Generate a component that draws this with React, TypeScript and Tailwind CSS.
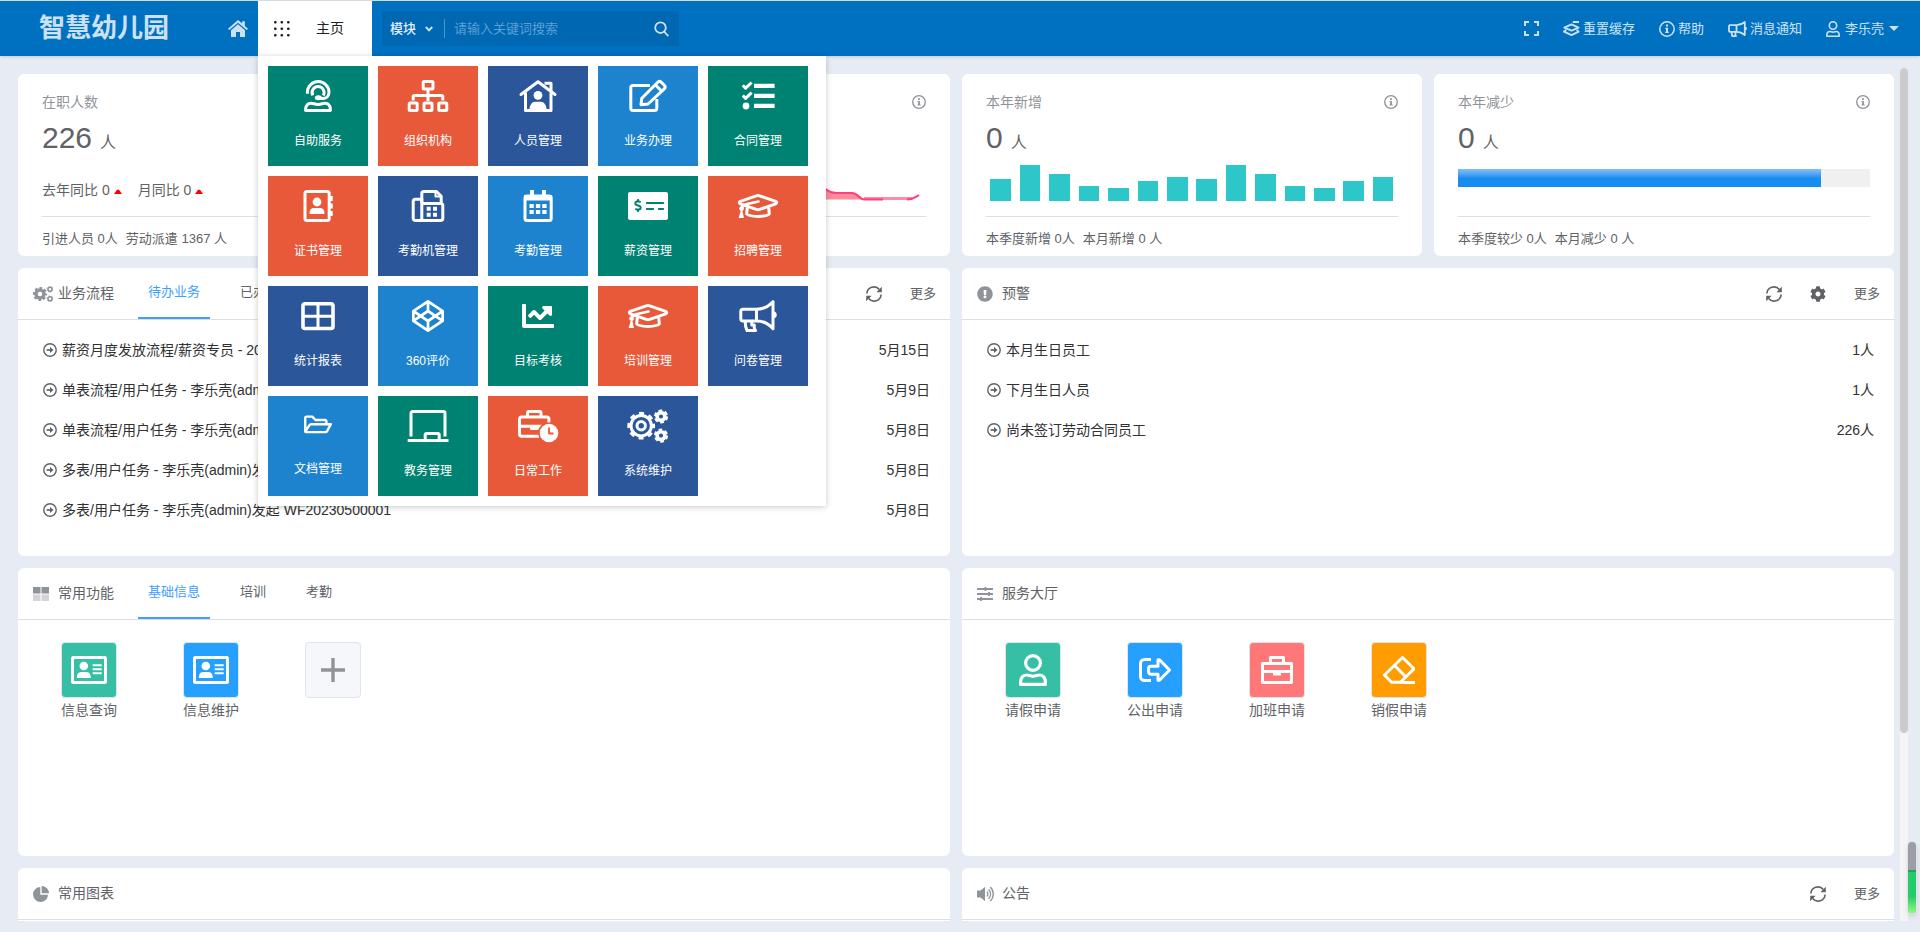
import type { ReactNode } from 'react'
import { FaChartLine, FaCodepen, FaCog, FaExclamationCircle, FaMoneyCheckAlt } from 'react-icons/fa'

type IconProps = { className?: string }

const tileColors = {
  green: 'bg-[#008272]',
  orange: 'bg-[#e8593a]',
  navy: 'bg-[#2b579a]',
  blue: 'bg-[#1d83cf]',
}

function TileIcon({ children }: { children: ReactNode }) {
  return (
    <svg viewBox="0 0 40 32" className="h-8 w-10 overflow-visible" fill="none" stroke="currentColor" strokeWidth="3" strokeLinejoin="round">
      {children}
    </svg>
  )
}

const gradCap = (
  <TileIcon>
    <path d="M18.3 5.8a5 5 0 0 1 3.4 0l16 5.6c1.4.6 1.4 1.8 0 2.4l-16 5.6a5 5 0 0 1-3.4 0l-16-5.6c-1.4-.6-1.4-1.8 0-2.4z" />
    <path d="M20.5 11.6 8 14.2c-3 .8-4.3 2-4.3 5.3" strokeWidth="2.6" strokeLinecap="round" />
    <path d="M9.3 17.5 8.7 24c3.6 3.2 19 3.2 22.6 0l-.6-6.5" />
    <path d="M3.7 17.5 6 28H.6z" fill="currentColor" stroke="none" />
    <circle cx="3.6" cy="18.6" r="2.4" fill="currentColor" stroke="none" />
  </TileIcon>
)

const modules = [
  {
    name: '自助服务', color: tileColors.green, icon: (
      <TileIcon>
        <path d="M9.4 13.8v-1.6a10.8 10.6 0 0 1 21.6 0c0 4-2.8 6.4-6.2 6.4h-4" />
        <path d="M14.8 15.4a6 6 0 1 1 10.4.2" />
        <ellipse cx="20.4" cy="17.8" rx="3.6" ry="2.5" fill="currentColor" stroke="none" />
        <path d="M7.6 30.5c-.4-5 2.400-7.300 5.400-7.300 2.400 0 3.800 1.200 7 1.200s4.600-1.200 7-1.200c3 0 5.800 2.300 5.400 7.300z" />
      </TileIcon>
    ),
  },
  {
    name: '组织机构', color: tileColors.orange, icon: (
      <TileIcon>
        <rect x="15.2" y="1.5" width="9.8" height="7.5" rx="1" />
        <path d="M20 10v11M5.2 20.5v-3.700a1.3 1.3 0 0 1 1.3-1.300h27a1.3 1.3 0 0 1 1.3 1.300v3.700" />
        <rect x="1.2" y="23" width="8" height="7.5" rx="1" />
        <rect x="16" y="23" width="8" height="7.5" rx="1" />
        <rect x="30.8" y="23" width="8" height="7.5" rx="1" />
      </TileIcon>
    ),
  },
  {
    name: '人员管理', color: tileColors.navy, icon: (
      <TileIcon>
        <path d="M3 14.5 20 1.800l17 12.700" strokeLinecap="round" />
        <path d="M7.5 12.5v18H33v-18M26.5 3.200H33v8" />
        <circle cx="20" cy="15.300" r="4.400" fill="currentColor" stroke="none" />
        <path d="M11.3 31c0-6 2.700-9.300 6-9.300h5.400c3.300 0 6 3.300 6 9.300z" fill="currentColor" stroke="none" />
      </TileIcon>
    ),
  },
  {
    name: '业务办理', color: tileColors.blue, icon: (
      <TileIcon>
        <path d="M22 5.500H5a2.200 2.200 0 0 0-2.200 2.200v20.600A2.200 2.200 0 0 0 5 30.500h21.600a2.200 2.200 0 0 0 2.200-2.200V19" />
        <path d="m13 24.700.8-6.500L29.800 2.300a2.500 2.500 0 0 1 3.500 0l3 3a2.500 2.500 0 0 1 0 3.500L20 24z" />
        <path d="m27.500 5 6 6" />
      </TileIcon>
    ),
  },
  {
    name: '合同管理', color: tileColors.green, icon: (
      <TileIcon>
        <path d="m4.800 5.300 2.800 2.900 6-5.700M4.800 15.500l2.800 2.900 6-5.700" />
        <path d="M16 5.900h20.600M16 15.900h20.600M16 25.900h20.600" strokeWidth="4.200" />
        <circle cx="8" cy="26" r="3.400" fill="currentColor" stroke="none" />
      </TileIcon>
    ),
  },
  {
    name: '证书管理', color: tileColors.orange, icon: (
      <TileIcon>
        <rect x="7" y="1.500" width="24.200" height="29" rx="2" />
        <path d="M33 6v5M33 13.500v5M33 21v5" strokeWidth="3.500" />
        <circle cx="19" cy="12" r="4.400" fill="currentColor" stroke="none" />
        <path d="M11.600 24v-1.500c0-3 2-4.500 4-4.500h6.800c2 0 4 1.500 4 4.500V24z" fill="currentColor" stroke="none" />
      </TileIcon>
    ),
  },
  {
    name: '考勤机管理', color: tileColors.navy, icon: (
      <TileIcon>
        <path d="M13.800 9.300H7.500a2.300 2.300 0 0 0-2.300 2.300v16.600a2.300 2.300 0 0 0 2.300 2.300h25a2.300 2.300 0 0 0 2.300-2.300V15.500a2 2 0 0 0-2-2h-19zM13.800 13.500V30" />
        <path d="M13.800 13V3.500a2 2 0 0 1 2-2h12.700l4.700 4.700V13" />
        <path d="M27.500 1.500v5h5" strokeWidth="2" />
        <path d="M18.700 16.700h4v4h-4zM25 16.700h4v4h-4zM18.700 22.700h4v4h-4zM25 22.700h4v4h-4z" fill="currentColor" stroke="none" />
      </TileIcon>
    ),
  },
  {
    name: '考勤管理', color: tileColors.blue, icon: (
      <TileIcon>
        <rect x="7" y="6" width="26.200" height="24.500" rx="2" />
        <path d="M6 5h28v5.500H6zM12 0h4v6h-4zM24 0h4v6h-4z" fill="currentColor" stroke="none" />
        <path d="M11.500 14h4.300v4h-4.300zM17.900 14h4.300v4h-4.300zM24.300 14h4.300v4h-4.300zM11.500 20h4.300v4h-4.300zM17.900 20h4.300v4h-4.300zM24.300 20h4.300v4h-4.300z" fill="currentColor" stroke="none" />
      </TileIcon>
    ),
  },
  { name: '薪资管理', color: tileColors.green, icon: <FaMoneyCheckAlt className="h-8 w-10" /> },
  { name: '招聘管理', color: tileColors.orange, icon: gradCap },
  {
    name: '统计报表', color: tileColors.navy, icon: (
      <TileIcon>
        <rect x="5" y="3.700" width="30" height="24.800" rx="2" strokeWidth="3.600" />
        <path d="M20 4v24M5 16.200h30" />
      </TileIcon>
    ),
  },
  { name: '360评价', color: tileColors.blue, icon: <FaCodepen className="h-8 w-8" /> },
  { name: '目标考核', color: tileColors.green, icon: <FaChartLine className="h-8 w-8" /> },
  { name: '培训管理', color: tileColors.orange, icon: gradCap },
  {
    name: '问卷管理', color: tileColors.navy, icon: (
      <TileIcon>
        <path d="M18.500 9.300H5a2.200 2.200 0 0 0-2.200 2.200v7.300A2.200 2.200 0 0 0 5 21h13.500zM18.500 9.300C25 9.300 31 6 35 1.700v27C31 24 25 21 18.500 21" />
        <path d="M36 11.500c2.200.6 2.700 1.700 2.700 3.400s-.5 2.800-2.700 3.400z" fill="currentColor" stroke="none" />
        <path d="M7.200 21.500c0 3.500.4 6 1.800 9h8.500c-1.500-2-1.600-3.500-1.200-5.500h-2.500v-3.500" />
      </TileIcon>
    ),
  },
  {
    name: '文档管理', color: tileColors.blue, icon: (
      <svg viewBox="0 0 40 30" className="h-[30px] w-10" fill="none" stroke="currentColor" strokeWidth="2.400" strokeLinejoin="round">
        <path d="M7.200 21V8a1.400 1.400 0 0 1 1.400-1.400h5.700L17.500 10H27a1.400 1.400 0 0 1 1.400 1.400V14M7.200 21.500l4.300-6.400a2 2 0 0 1 1.600-.9h19.800l-3.800 6.900a2 2 0 0 1-1.700 1H8.200a1 1 0 0 1-1-.6z" />
      </svg>
    ),
  },
  {
    name: '教务管理', color: tileColors.green, icon: (
      <TileIcon>
        <path d="M3 26.500V3.200a1.700 1.700 0 0 1 1.700-1.700h30.600A1.700 1.700 0 0 1 37 3.200v23.300" />
        <path d="M17.200 30v-5.300a1.200 1.200 0 0 1 1.200-1.200H30a1.200 1.200 0 0 1 1.200 1.200V30M-.3 30.500h40.800" />
      </TileIcon>
    ),
  },
  {
    name: '日常工作', color: tileColors.orange, icon: (
      <TileIcon>
        <path d="M22 26.200H3.700A2.200 2.200 0 0 1 1.500 24V9.200A2.200 2.200 0 0 1 3.700 7h25a2.200 2.200 0 0 1 2.200 2.200V13M9.500 7V3A1.500 1.500 0 0 1 11 1.500h10.500A1.500 1.500 0 0 1 23 3v4M1.500 16.200h22" />
        <path d="M12 16h9v2.500a1.500 1.500 0 0 1-1.500 1.500h-6a1.500 1.500 0 0 1-1.500-1.500z" fill="currentColor" stroke="none" />
        <circle cx="31" cy="23" r="10.800" fill="#e8593a" stroke="none" />
        <circle cx="31" cy="23" r="9.300" fill="currentColor" stroke="none" />
        <path d="M31 17.500v6h4.500" stroke="#e8593a" strokeWidth="1.800" />
      </TileIcon>
    ),
  },
  {
    name: '系统维护', color: tileColors.navy, icon: (
      <TileIcon>
        <circle cx="13.200" cy="15.700" r="10.200" />
        <circle cx="13.200" cy="15.700" r="12.400" strokeDasharray="5 4.740" strokeDashoffset="2.500" />
        <circle cx="13.200" cy="15.700" r="4.200" />
        <circle cx="33" cy="6.500" r="3.900" strokeWidth="3.600" />
        <circle cx="33" cy="6.500" r="5.900" strokeWidth="2.400" strokeDasharray="3.600 2.580" />
        <circle cx="33" cy="25.600" r="3.900" strokeWidth="3.600" />
        <circle cx="33" cy="25.600" r="5.900" strokeWidth="2.400" strokeDasharray="3.600 2.580" />
      </TileIcon>
    ),
  },
]

const todos = [
  { text: '薪资月度发放流程/薪资专员 - 20230500001', date: '5月15日' },
  { text: '单表流程/用户任务 - 李乐壳(admin)发起 WF20230500004', date: '5月9日' },
  { text: '单表流程/用户任务 - 李乐壳(admin)发起 WF20230500003', date: '5月8日' },
  { text: '多表/用户任务 - 李乐壳(admin)发起 WF20230500002', date: '5月8日' },
  { text: '多表/用户任务 - 李乐壳(admin)发起 WF20230500001', date: '5月8日' },
]

const warnings = [
  { text: '本月生日员工', date: '1人' },
  { text: '下月生日人员', date: '1人' },
  { text: '尚未签订劳动合同员工', date: '226人' },
]

const bars = [22, 36, 27, 15, 13, 20, 24, 22, 36, 27, 15, 13, 20, 24]

function InfoIcon({ className }: IconProps) {
  return (
    <svg viewBox="0 0 16 16" className={className} fill="none" stroke="currentColor">
      <circle cx="8" cy="8" r="7.200" strokeWidth="1.500" />
      <path d="M7 3.600h2v2H7zM6.300 6.800H9v4h.8v1.300H6.200v-1.300H7V8h-.7z" fill="currentColor" stroke="none" />
    </svg>
  )
}

function ArrowCircle() {
  return (
    <svg viewBox="0 0 14 14" className="h-3.5 w-3.5 shrink-0 text-[#606266]" fill="none" stroke="currentColor">
      <circle cx="7" cy="7" r="6.200" strokeWidth="1.400" />
      <path d="M3.600 7h4.500" strokeWidth="1.700" />
      <path d="M7 3.900 10.500 7 7 10.100z" fill="currentColor" stroke="none" />
    </svg>
  )
}

function RefreshIcon() {
  return (
    <svg viewBox="0 0 16 16" className="h-4 w-4" fill="none" stroke="currentColor" strokeWidth="1.600">
      <path d="M.9 7.500A7 7 0 0 1 13.300 3.500M15.100 8.500A7 7 0 0 1 2.700 12.500" />
      <path d="M15.800.8v5.400h-5.400zM.2 15.200V9.800h5.400z" fill="currentColor" stroke="none" />
    </svg>
  )
}

function BullhornIcon() {
  return (
    <svg viewBox="0 0 19 16" className="h-4 w-[19px]" fill="none" stroke="currentColor" strokeWidth="1.800" strokeLinejoin="round">
      <path d="M8.500 4.200H2a1 1 0 0 0-1 1v4.600a1 1 0 0 0 1 1h6.500zM8.500 4.200c3.300 0 6-1.300 8.300-3.200v13c-2.300-2-5-3.200-8.300-3.200M3.600 11c0 1.700.2 2.900.9 4.200h3.400c-.6-1-.7-2-.4-4M17.800 6v3" />
    </svg>
  )
}

function UserIcon({ className }: IconProps) {
  return (
    <svg viewBox="0 0 28 32" className={className} fill="none" stroke="currentColor" strokeWidth="3.200" strokeLinejoin="round">
      <circle cx="14" cy="9" r="7.400" />
      <path d="M1.600 30.400c-.4-7 2.600-9.400 6-9.400 2 0 3.500 1.300 6.400 1.300s4.400-1.300 6.400-1.300c3.400 0 6.400 2.400 6 9.400z" />
    </svg>
  )
}

function IdCardIcon() {
  return (
    <svg viewBox="0 0 36 28" className="h-7 w-9" fill="none" stroke="currentColor" strokeWidth="3">
      <rect x="1.500" y="1.500" width="33" height="25" rx="1" />
      <circle cx="12.800" cy="10" r="4.300" fill="currentColor" stroke="none" />
      <path d="M5.800 22c0-4 1.600-6 4-6h6c2.400 0 4 2 4 6z" fill="currentColor" stroke="none" />
      <path d="M21.700 9.200h9M21.700 13.200h9M21.700 17.200h9" strokeWidth="1.900" />
    </svg>
  )
}

function MoreActions({ settings }: { settings?: boolean }) {
  return (
    <div className="ml-auto flex items-center gap-7 text-[#606266]">
      <button type="button" aria-label="刷新"><RefreshIcon /></button>
      {settings && <button type="button" aria-label="设置"><FaCog className="h-4 w-4" /></button>}
      <a href="#more" className="text-[13px]">更多</a>
    </div>
  )
}

function PanelHeader({ icon, title, tabs, children }: { icon: ReactNode; title: string; tabs?: string[]; children?: ReactNode }) {
  return (
    <div className="flex h-[52px] items-center border-b border-[#dcdfe6] pr-3.5 pl-[15px]">
      <span className="flex w-[25px] shrink-0 items-center text-[#909399]">{icon}</span>
      <h2 className="pb-0.5 text-sm text-[#606266]">{title}</h2>
      {tabs && (
        <div className="ml-6 flex gap-5 self-stretch text-[13px] text-[#606266]">
          {tabs.map((tab, index) => (
            <button
              key={tab}
              type="button"
              className={index === 0 ? 'border-b-2 border-[#409eff] px-2.5 pb-0.5 text-[#409eff]' : 'border-b-2 border-transparent px-2.5 pb-0.5'}
            >
              {tab}
            </button>
          ))}
        </div>
      )}
      {children}
    </div>
  )
}

function StatCard({ label, value, footer, children }: { label?: string; value?: string; footer?: ReactNode; children: ReactNode }) {
  return (
    <section className="rounded-md bg-white px-6 pt-[18px] text-[#606266]">
      <div className="flex h-5 items-center justify-between text-sm text-[#909399]">
        <span>{label}</span>
        <InfoIcon className="h-3.5 w-3.5" />
      </div>
      <div className="mt-1.5 h-10 leading-10">
        {value && <><span className="text-[30px]">{value}</span><span className="ml-2 text-base leading-10">人</span></>}
      </div>
      <div className="mt-[7px] h-9">{children}</div>
      <div className="mt-[15px] flex h-10 items-center gap-2 border-t border-[#dcdfe6] pt-1 text-[13px]">{footer}</div>
    </section>
  )
}

function ItemList({ items }: { items: { text: string; date: string }[] }) {
  return (
    <ul className="pt-2.5 pr-5 pl-[25px] text-sm text-[#303133]">
      {items.map((item) => (
        <li key={item.text} className="flex h-10 items-center">
          <ArrowCircle />
          <span className="ml-[5px]">{item.text}</span>
          <span className="ml-auto">{item.date}</span>
        </li>
      ))}
    </ul>
  )
}

function Shortcut({ label, color, children }: { label?: string; color: string; children: ReactNode }) {
  return (
    <button type="button" className="flex w-14 flex-col items-center whitespace-nowrap text-[#606266]">
      <span className={`flex h-14 w-14 items-center justify-center rounded-[4px] border border-[#e0e3eb] ${color}`}>{children}</span>
      <span className="mt-0.5 text-sm">{label}</span>
    </button>
  )
}

function UpMark() {
  return (
    <svg viewBox="0 0 8 5" className="ml-1 inline-block h-[5px] w-2 align-middle"><path d="M0 5 3 .8h2L8 5z" fill="#f00" /></svg>
  )
}

function ModuleMenu() {
  return (
    <div className="absolute top-full left-0 z-10 grid w-[568px] grid-cols-[repeat(5,100px)] gap-2.5 bg-white p-2.5 shadow-[0_1px_6px_rgba(0,0,0,0.22)]">
      {modules.map((item) => (
        <a key={item.name} href="#module" className={`flex h-[100px] flex-col items-center pt-3.5 text-white ${item.color}`}>
          {item.icon}
          <span className="mt-5 text-xs leading-[18px]">{item.name}</span>
        </a>
      ))}
    </div>
  )
}

function Header() {
  return (
    <header className="relative z-10 flex h-14 shrink-0 items-center border-t border-[#d5dbe0] bg-[#0070c1] pr-[21px] pl-[39px] text-[13px] text-white/80 shadow-sm">
      <h1 className="w-[189px] text-[26px] font-bold">智慧幼儿园</h1>
      <a href="#home" aria-label="首页" className="w-[30px]">
        <svg viewBox="0 0 20 17" className="h-[17px] w-5" fill="currentColor">
          <path d="M10 0 0 8.800l1.300 1.300L10 2.700l8.700 7.400L20 8.800l-3.200-2.900V1.300h-2.600v2.300z" />
          <path d="m10 4.300-7 6V17h5v-5h4v5h5v-6.700z" />
        </svg>
      </a>
      <div className="relative flex h-[55px] w-[114px] items-center gap-[26px] bg-white pl-4 text-sm text-[#222]">
        <button type="button" aria-label="全部模块">
          <svg viewBox="0 0 16 16" className="h-4 w-4" fill="currentColor">
            {[0, 6.5, 13].map((y) => [0, 6.5, 13].map((x) => <rect key={`${x}-${y}`} x={x} y={y} width="2.600" height="2.600" rx="1" />))}
          </svg>
        </button>
        <a href="#main" className="pb-0.5">主页</a>
        <ModuleMenu />
      </div>
      <form className="ml-2.5 flex h-[35px] w-[297px] items-center bg-[#0067b3] pr-2.5 pl-2">
        <div className="relative flex items-center">
          <select aria-label="搜索范围" className="w-[55px] appearance-none border-r border-white/30 text-[13px] font-medium text-white/90 outline-none">
            <option>模块</option>
          </select>
          <svg viewBox="0 0 8 6" className="pointer-events-none absolute right-3 h-1.5 w-2" fill="none" stroke="currentColor" strokeWidth="2"><path d="m.8 1 3.200 3.400L7.200 1" /></svg>
        </div>
        <input aria-label="关键词" placeholder="请输入关键词搜索" className="ml-[9px] min-w-0 flex-1 outline-none placeholder:text-[#5b9fd3]" />
        <button type="button" aria-label="搜索">
          <svg viewBox="0 0 16 16" className="h-4 w-4" fill="none" stroke="currentColor" strokeWidth="1.800"><circle cx="7.500" cy="6.700" r="5.300" /><path d="m11 10.500 4.300 4.700" /></svg>
        </button>
      </form>
      <nav className="ml-auto flex items-center gap-6">
        <button type="button" aria-label="全屏">
          <svg viewBox="0 0 15 15" className="h-[15px] w-[15px]" fill="none" stroke="currentColor" strokeWidth="2"><path d="M1 5V1h4M10 1h4v4M14 10v4h-4M5 14H1v-4" /></svg>
        </button>
        <button type="button" className="flex items-center gap-[3px]">
          <svg viewBox="0 0 17 15" className="h-[15px] w-[17px]" fill="none" stroke="currentColor" strokeWidth="1.800" strokeLinejoin="round">
            <path d="M9.800 1H16M8.500 3.400 15.500 6.600 8.500 9.700 1.300 6.600zM3.200 9 1 10.600l7.500 3.500 7.200-3.500L13.600 9" />
          </svg>
          重置缓存
        </button>
        <button type="button" className="flex items-center gap-[3px]"><InfoIcon className="h-4 w-4" />帮助</button>
        <button type="button" className="flex items-center gap-[3px]"><BullhornIcon />消息通知</button>
        <button type="button" className="flex items-center gap-[5px]">
          <UserIcon className="h-4 w-3.5" />
          李乐壳
          <svg viewBox="0 0 10 5" className="h-[5px] w-2.5" fill="currentColor"><path d="M0 0h10L5 5z" /></svg>
        </button>
      </nav>
    </header>
  )
}

export default function App() {
  return (
    <div className="flex h-screen flex-col overflow-hidden bg-[#e7ecf4] font-['Liberation_Sans','Noto_Sans_CJK_SC',sans-serif]">
      <Header />
      <div className="mt-3 mb-[11px] flex min-h-0 flex-1 pr-3 pl-[18px]">
        <main className="h-full flex-1 overflow-hidden pt-1.5 pr-1.5">
          <div className="grid grid-cols-4 gap-3">
            <StatCard label="在职人数" value="226" footer={<><span>引进人员 0人</span><span>劳动派遣 1367 人</span></>}>
              <div className="flex h-full items-end gap-4 text-sm leading-[22px]">
                <span>去年同比 0<UpMark /></span>
                <span>月同比 0<UpMark /></span>
              </div>
            </StatCard>
            <StatCard>
              <svg viewBox="0 0 412 36" preserveAspectRatio="none" className="h-9 w-full">
                <path d="M8 20C60 20 60 6 110 6s60 20 110 18 60-18 80-12c6 3 10 16 22 16h16c7 0 6 6.500 13 6.500H8z" fill="#ff8b9b" />
                <path d="M350 33.500h48" stroke="#ff8ba5" strokeWidth="3" />
                <path d="M8 20C60 20 60 6 110 6s60 20 110 18 60-18 80-12c6 3 10 16 22 16h16c7 0 6 6.500 13 6.500h18M393 34.500c6 0 8-2 12-4.500" fill="none" stroke="#ff3f7f" strokeWidth="2" />
              </svg>
            </StatCard>
            <StatCard label="本年新增" value="0" footer={<><span>本季度新增 0人</span><span>本月新增 0 人</span></>}>
              <div className="flex h-full items-end">
                {bars.map((height, index) => (
                  <div key={index} className="flex flex-1 justify-center">
                    <div className="w-[70%] bg-[#2ec7c9]" style={{ height }} />
                  </div>
                ))}
              </div>
            </StatCard>
            <StatCard label="本年减少" value="0" footer={<><span>本季度较少 0人</span><span>本月减少 0 人</span></>}>
              <div className="pt-1">
                <div className="h-[18px] bg-[#f0f0f0]">
                  <div className="h-full w-[88%] bg-linear-to-b from-[#83bff6] to-[#188df0] to-50%" />
                </div>
              </div>
            </StatCard>
          </div>

          <div className="mt-3 grid auto-rows-[288px] grid-cols-2 gap-3">
            <section className="rounded-md bg-white">
              <PanelHeader
                title="业务流程"
                tabs={['待办业务', '已办业务']}
                icon={
                  <svg viewBox="0 0 20 16" className="h-4 w-5" fill="none" stroke="currentColor">
                    <circle cx="7" cy="8" r="4" strokeWidth="3.400" />
                    <circle cx="7" cy="8" r="6" strokeWidth="2.200" strokeDasharray="2.700 2.010" strokeDashoffset="1.300" />
                    <circle cx="17" cy="3.200" r="2" strokeWidth="1.600" />
                    <circle cx="17" cy="3.200" r="2.900" strokeWidth=".8" strokeDasharray="1.500 1.500" />
                    <circle cx="17" cy="12.800" r="2" strokeWidth="1.600" />
                    <circle cx="17" cy="12.800" r="2.900" strokeWidth=".8" strokeDasharray="1.500 1.500" />
                  </svg>
                }
              >
                <MoreActions />
              </PanelHeader>
              <ItemList items={todos} />
            </section>

            <section className="rounded-md bg-white">
              <PanelHeader title="预警" icon={<FaExclamationCircle className="h-4 w-4" />}>
                <MoreActions settings />
              </PanelHeader>
              <ItemList items={warnings} />
            </section>

            <section className="rounded-md bg-white">
              <PanelHeader
                title="常用功能"
                tabs={['基础信息', '培训', '考勤']}
                icon={
                  <svg viewBox="0 0 16 14" className="h-3.5 w-4" fill="currentColor">
                    <path d="M0 0h7.500v6.500H0zM8.500 0H16v6.500H8.500z" />
                    <path d="M0 7.500h7.500V14H0zM8.500 7.500H16V14H8.500z" fill="#d3d4d6" />
                  </svg>
                }
              />
              <div className="flex gap-[66px] pt-[22px] pl-[43px]">
                <Shortcut label="信息查询" color="bg-[#36bfa5] text-white"><IdCardIcon /></Shortcut>
                <Shortcut label="信息维护" color="bg-[#26a0ff] text-white"><IdCardIcon /></Shortcut>
                <Shortcut color="bg-[#f5f7fb] text-[#909399]">
                  <svg viewBox="0 0 24 24" className="h-6 w-6" fill="none" stroke="currentColor" strokeWidth="3.400"><path d="M12 0v24M0 12h24" /></svg>
                </Shortcut>
              </div>
            </section>

            <section className="rounded-md bg-white">
              <PanelHeader
                title="服务大厅"
                icon={
                  <svg viewBox="0 0 16 14" className="h-3.5 w-4" fill="none" stroke="currentColor" strokeWidth="1.800">
                    <path d="M0 2h16M0 7h16M0 12h16M8.500 0v4M12 5v4M4 10v4" />
                  </svg>
                }
              />
              <div className="flex gap-[66px] pt-[22px] pl-[43px]">
                <Shortcut label="请假申请" color="bg-[#36bfa5] text-white"><UserIcon className="h-8 w-7" /></Shortcut>
                <Shortcut label="公出申请" color="bg-[#26a0ff] text-white">
                  <svg viewBox="0 0 32 24" className="h-6 w-8" fill="none" stroke="currentColor" strokeWidth="3" strokeLinejoin="round">
                    <path d="M12 1.500H5.500a4 4 0 0 0-4 4v13a4 4 0 0 0 4 4H12" />
                    <path d="M19 8.200h-7a2.500 2.500 0 0 0-2.500 2.500v3a2.500 2.500 0 0 0 2.500 2.500h7v6h1.500L30.500 12 20.500 1.700H19z" />
                  </svg>
                </Shortcut>
                <Shortcut label="加班申请" color="bg-[#ff7777] text-white">
                  <svg viewBox="0 0 32 28" className="h-7 w-8" fill="none" stroke="currentColor" strokeWidth="3" strokeLinejoin="round">
                    <path d="M1.500 7.500h29v19h-29zM9.500 7V1.500h13V7M1.500 15.500h29" />
                    <path d="M12 15h8v4.500h-8z" fill="currentColor" stroke="none" />
                  </svg>
                </Shortcut>
                <Shortcut label="销假申请" color="bg-[#ff9c00] text-white">
                  <svg viewBox="0 0 32 28" className="h-7 w-8" fill="none" stroke="currentColor" strokeWidth="3" strokeLinejoin="round">
                    <path d="M19.500 1.500 31 12.800 17.500 26.300h-9L1.500 19zM12 9.800l11 11.500M17 26.500h15" />
                  </svg>
                </Shortcut>
              </div>
            </section>

            <section className="rounded-md bg-white">
              <PanelHeader
                title="常用图表"
                icon={
                  <svg viewBox="0 0 16 16" className="h-4 w-4" fill="currentColor">
                    <path d="M7.300 1v7.700H15A7.500 7.500 0 1 1 7.300 1z" />
                    <path d="M8.700 0A7.400 7.400 0 0 1 16 7.300H8.700z" />
                  </svg>
                }
              />
            </section>

            <section className="rounded-md bg-white">
              <PanelHeader
                title="公告"
                icon={
                  <svg viewBox="0 0 18 16" className="h-4 w-[18px]" fill="none" stroke="currentColor" strokeWidth="1.300">
                    <path d="M0 4.500h3.500L8 1v14l-4.500-3.500H0z" fill="currentColor" stroke="none" />
                    <path d="M9.800 5.500a3.500 3.500 0 0 1 0 5M11.500 3.200a6.500 6.500 0 0 1 0 9.600M13.200 1a9.500 9.500 0 0 1 0 14" />
                  </svg>
                }
              >
                <MoreActions />
              </PanelHeader>
            </section>
          </div>
        </main>
        <div className="h-full w-2 bg-[#f5f5f5]">
          <div className="h-[78%] rounded-full bg-[#cbcbcb]" />
        </div>
      </div>

      <div className="fixed right-[3px] bottom-[18px] z-20 flex h-[73px] w-2.5 flex-col overflow-hidden rounded-full border border-white/70 bg-[#9b9ea4] shadow-md">
        <div className="mt-auto h-[60%] border-t-2 border-[#1fa65a] bg-linear-to-b from-[#24cb6b] from-60% to-[#86fb7c]" />
      </div>
    </div>
  )
}
